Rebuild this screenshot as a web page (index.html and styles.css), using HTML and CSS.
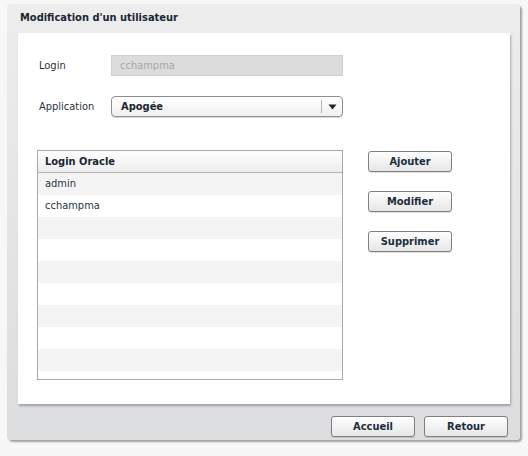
FILE: index.html
```html
<!DOCTYPE html>
<html>
<head>
<meta charset="utf-8">
<link rel="stylesheet" href="styles.css">
</head>
<body>
<div class="window">
  <div class="title">Modification d'un utilisateur</div>
  <div class="content">
    <div class="field">
      <label class="label">Login</label>
      <div class="input disabled">cchampma</div>
    </div>
    <div class="field">
      <label class="label">Application</label>
      <div class="select">
        <span class="select-value">Apogée</span>
        <span class="select-arrow"><svg width="9" height="6" viewBox="0 0 9 6"><path d="M0.5 0.5h8l-4 5z" fill="#1b2631"/></svg></span>
      </div>
    </div>
    <div class="grid-area">
      <div class="table">
        <div class="thead">Login Oracle</div>
        <div class="tbody">
          <div class="row">admin</div>
          <div class="row">cchampma</div>
          <div class="row"></div>
          <div class="row"></div>
          <div class="row"></div>
          <div class="row"></div>
          <div class="row"></div>
          <div class="row"></div>
          <div class="row"></div>
          <div class="row"></div>
        </div>
      </div>
      <div class="actions">
        <button class="btn">Ajouter</button>
        <button class="btn">Modifier</button>
        <button class="btn">Supprimer</button>
      </div>
    </div>
  </div>
  <div class="footer">
    <button class="btn">Accueil</button>
    <button class="btn">Retour</button>
  </div>
</div>
</body>
</html>
```
FILE: styles.css
```css
html, body {
  margin: 0;
  padding: 0;
}
body {
  background: #f7f7f7;
  font-family: "DejaVu Sans Condensed", "DejaVu Sans", Verdana, sans-serif;
  font-size: 11px;
  color: #1e2a36;
  width: 528px;
  height: 456px;
  overflow: hidden;
}
.window {
  margin: 4px 0 0 7px;
  width: 513px;
  height: 436px;
  border-radius: 4px;
  background: linear-gradient(#ededed, #dcdddf);
  box-shadow: 2px 2px 2px rgba(0, 0, 0, 0.35);
  display: flex;
  flex-direction: column;
}
.title {
  height: 29px;
  line-height: 27px;
  padding-left: 13px;
  font-weight: bold;
  color: #1b2631;
}
.content {
  margin-left: 11px;
  width: 492px;
  height: 371px;
  background: #fff;
  box-shadow: 1px 2px 2px rgba(0, 0, 0, 0.28);
  padding: 22px 0 0 21px;
  box-sizing: border-box;
}
.field {
  display: flex;
  align-items: center;
  height: 21px;
}
.field + .field {
  margin-top: 20px;
}
.label {
  width: 72px;
  color: #2a3440;
}
.input {
  width: 232px;
  height: 21px;
  box-sizing: border-box;
  padding-left: 8px;
  line-height: 20px;
}
.disabled {
  background: #dcdcdc;
  border: 1px solid #d0d0d0;
  color: #a6a6a6;
}
.select {
  width: 232px;
  height: 21px;
  box-sizing: border-box;
  border: 1px solid #8e8e8e;
  border-radius: 4px;
  background: linear-gradient(#ffffff, #f0f0f0);
  display: flex;
  align-items: center;
  box-shadow: 0 1px 0 rgba(0,0,0,0.15);
}
.select-value {
  flex: 1;
  padding-left: 9px;
  font-weight: bold;
  color: #1b2631;
}
.select-arrow {
  width: 20px;
  height: 13px;
  border-left: 1px solid #b5b5b5;
  display: flex;
  align-items: center;
  justify-content: center;
}
.grid-area {
  display: flex;
  margin-top: 33px;
  margin-left: -2px;
}
.table {
  width: 306px;
  height: 230px;
  box-sizing: border-box;
  border: 1px solid #a9a9a9;
  overflow: hidden;
}
.thead {
  height: 22px;
  box-sizing: border-box;
  border-bottom: 1px solid #b3b3b3;
  background: linear-gradient(#ffffff, #ececec);
  font-weight: bold;
  line-height: 21px;
  padding-left: 7px;
  color: #1b2631;
}
.row {
  height: 22px;
  line-height: 21px;
  padding-left: 7px;
  color: #2a3440;
}
.row:nth-child(odd) {
  background: #f4f4f4;
}
.actions {
  margin-left: 25px;
  margin-top: 1px;
  display: flex;
  flex-direction: column;
  gap: 19px;
}
.btn {
  width: 84px;
  height: 21px;
  box-sizing: border-box;
  border: 1px solid #7f7f7f;
  border-radius: 3px;
  background: linear-gradient(#ffffff, #e6e6e6);
  font-family: "DejaVu Sans Condensed", "DejaVu Sans", Verdana, sans-serif;
  font-size: 11px;
  font-weight: bold;
  color: #1b2e3e;
  padding: 0;
  box-shadow: 0 1px 0 rgba(0,0,0,0.12);
}
.footer {
  display: flex;
  justify-content: flex-end;
  gap: 9px;
  padding: 12px 12px 0 0;
}
```
